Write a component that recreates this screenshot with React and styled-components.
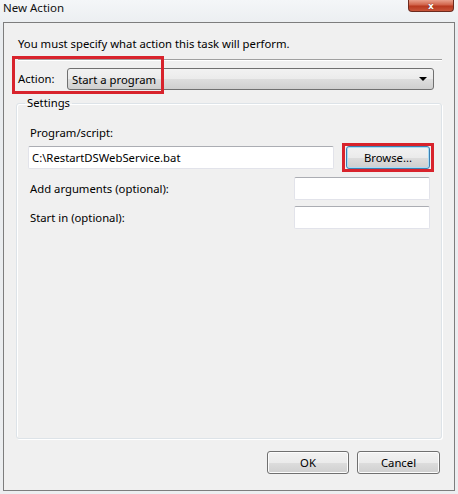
import React from 'react';
import styled, { createGlobalStyle } from 'styled-components';

const GlobalStyle = createGlobalStyle`
  html, body {
    margin: 0;
    padding: 0;
  }
  body {
    font-family: "Noto Sans", "Open Sans", Arial, sans-serif;
    font-size: 11.3px;
    color: #000;
  }
`;

const Window = styled.div`
  width: 458px;
  height: 494px;
  box-sizing: border-box;
  display: flex;
  flex-direction: column;
  background: linear-gradient(180deg, #f4f6f8 0%, #e9ecef 6%, #eceef0 100%);
  overflow: hidden;
`;

const TitleBar = styled.div`
  height: 22px;
  display: flex;
  align-items: flex-start;
  justify-content: space-between;
  padding: 0 4px 0 3px;
`;

const Title = styled.span`
  font-size: 11.5px;
  line-height: 15px;
  color: #111;
`;

const CloseButton = styled.div`
  width: 46px;
  height: 12px;
  box-sizing: border-box;
  border: 1px solid #6d2a1e;
  border-top: none;
  border-radius: 0 0 4px 4px;
  background: linear-gradient(180deg, #e9a08c 0%, #d1634a 45%, #b8391f 55%, #c8553a 100%);
  display: flex;
  align-items: center;
  justify-content: center;
  color: #fff;
  font-family: "DejaVu Sans", sans-serif;
  font-weight: bold;
  font-size: 9px;
  line-height: 10px;
  text-shadow: 0 0 1px #4a1a10;
`;

const Client = styled.div`
  position: relative;
  margin: 0 3px 3px 3px;
  flex: 1;
  border: 1px solid #7d7d7d;
  background: #f0f0f0;
  display: flex;
  flex-direction: column;
`;

const Intro = styled.div`
  margin: 13px 0 0 14px;
  line-height: 16px;
`;

const Separator = styled.div`
  margin: 7px 12px 0 14px;
  height: 1px;
  background: #a0a0a0;
  border-bottom: 1px solid #fff;
`;

const ActionRow = styled.div`
  display: flex;
  align-items: center;
  margin: 7px 20px 0 14px;
`;

const Label = styled.span`
  line-height: 16px;
  white-space: nowrap;
  margin-left: 2px;
`;

const ActionLabel = styled(Label)`
  margin-left: 0;
  width: 49px;
`;

const Combo = styled.div`
  flex: 1;
  height: 22px;
  box-sizing: border-box;
  border: 1px solid #707070;
  border-radius: 3px;
  background: linear-gradient(180deg, #f2f2f2 0%, #ebebeb 50%, #dddddd 51%, #cfcfcf 100%);
  display: flex;
  align-items: center;
  justify-content: space-between;
  padding: 0 6px 0 4px;
`;

const Arrow = styled.span`
  width: 0;
  height: 0;
  border-left: 4px solid transparent;
  border-right: 4px solid transparent;
  border-top: 4px solid #000;
`;

const Group = styled.fieldset`
  margin: 5px 12px 0 12px;
  padding: 0 11px 0 11px;
  height: 344px;
  box-sizing: border-box;
  border: 1px solid #dde3e8;
  border-radius: 3px;
  box-shadow: inset 1px 1px 0 #fff, 1px 1px 0 #fff;
  display: flex;
  flex-direction: column;
`;

const Legend = styled.legend`
  padding: 0 2px;
  margin-left: -3px;
  line-height: 16px;
`;

const ScriptLabel = styled(Label)`
  margin-top: 14px;
`;

const FieldRow = styled.div`
  display: flex;
  align-items: center;
  justify-content: space-between;
  margin-top: ${p => p.$top}px;
`;

const TextBox = styled.div`
  width: ${p => p.$width}px;
  height: 23px;
  box-sizing: border-box;
  background: #fff;
  border: 1px solid #e2e3ea;
  border-top-color: #abadb3;
  border-radius: 2px;
  display: flex;
  align-items: center;
  padding-left: 3px;
  line-height: 16px;
  white-space: nowrap;
`;

const MarkWrap = styled.div`
  position: relative;
  display: flex;
`;

const RedMark = styled.div`
  position: absolute;
  border: 3px solid #d8232c;
  pointer-events: none;
`;

const ActionMark = styled(RedMark)`
  left: 8px;
  top: 33px;
  width: 146px;
  height: 32px;
`;

const BrowseMark = styled(RedMark)`
  left: -4px;
  right: -4px;
  top: -3px;
  bottom: -3px;
`;

const Button = styled.div`
  width: ${p => p.$width}px;
  height: 23px;
  box-sizing: border-box;
  border: 1px solid ${p => (p.$focused ? '#3c7fb1' : '#707070')};
  border-radius: 3px;
  background: linear-gradient(180deg, #f2f2f2 0%, #ebebeb 50%, #dddddd 51%, #cfcfcf 100%);
  box-shadow: ${p => (p.$focused ? 'inset 0 0 0 1px #a9dcf6' : 'inset 0 0 0 1px #fcfcfc')};
  display: flex;
  align-items: center;
  justify-content: center;
  line-height: 16px;
`;

const Footer = styled.div`
  display: flex;
  justify-content: flex-end;
  gap: 8px;
  margin: 12px 14px 0 0;
`;

export default function App() {
  return (
    <>
      <GlobalStyle />
      <Window>
        <TitleBar>
          <Title>New Action</Title>
          <CloseButton>x</CloseButton>
        </TitleBar>
        <Client>
          <Intro>You must specify what action this task will perform.</Intro>
          <Separator />
          <ActionRow>
            <ActionLabel>Action:</ActionLabel>
            <Combo>
              <span>Start a program</span>
              <Arrow />
            </Combo>
          </ActionRow>
          <Group>
            <Legend>Settings</Legend>
            <ScriptLabel>Program/script:</ScriptLabel>
            <FieldRow $top={5}>
              <TextBox $width={306}>C:\RestartDSWebService.bat</TextBox>
              <MarkWrap>
                <Button $width={84} $focused>Browse...</Button>
                <BrowseMark />
              </MarkWrap>
            </FieldRow>
            <FieldRow $top={8}>
              <Label>Add arguments (optional):</Label>
              <TextBox $width={136} />
            </FieldRow>
            <FieldRow $top={6}>
              <Label>Start in (optional):</Label>
              <TextBox $width={136} />
            </FieldRow>
          </Group>
          <Footer>
            <Button $width={82}>OK</Button>
            <Button $width={83}>Cancel</Button>
          </Footer>
          <ActionMark />
        </Client>
      </Window>
    </>
  );
}
